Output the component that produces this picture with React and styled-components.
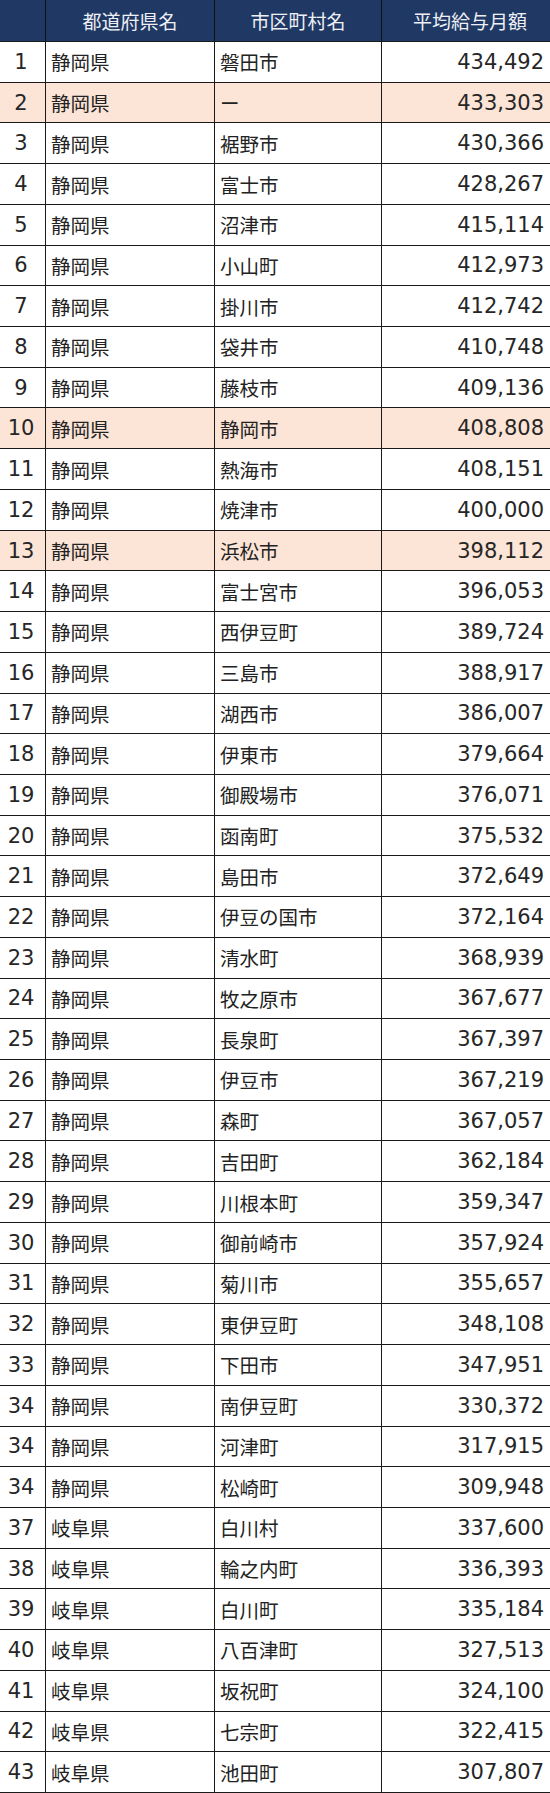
import React from 'react';
import styled, { createGlobalStyle } from 'styled-components';

const GlobalStyle = createGlobalStyle`
  html, body {
    margin: 0;
    padding: 0;
    background: #ffffff;
  }
  body {
    font-family: "Noto Sans CJK JP", "Noto Sans", sans-serif;
  }
`;

const Table = styled.div`
  width: 550px;
  height: 1793px;
  display: grid;
  grid-template-columns: 45px 169px 167px 169px;
  grid-template-rows: 41px repeat(43, 1fr);
  box-sizing: border-box;
  border-right: 1px solid #1a1a1a;
  border-bottom: 1px solid #1a1a1a;
  color: #222;
`;

const HeadCell = styled.div`
  background: #203864;
  color: #eef0f6;
  font-size: 19px;
  display: flex;
  align-items: center;
  justify-content: center;
  border-left: ${(p) => (p.$first ? 'none' : '1px solid #111')};
  padding-left: ${(p) => (p.$shift ? '8px' : '0')};
`;

const Cell = styled.div`
  background: ${(p) => (p.$hl ? '#fce4d6' : '#ffffff')};
  border-top: 1px solid #1a1a1a;
  border-left: ${(p) => (p.$first ? 'none' : '1px solid #1a1a1a')};
  font-size: 19.5px;
  display: flex;
  align-items: center;
  justify-content: ${(p) => p.$align || 'flex-start'};
  padding: 0 5px;
  box-sizing: border-box;
  white-space: nowrap;
`;

const NumCell = styled(Cell)`
  font-family: "DejaVu Sans", "Noto Sans", sans-serif;
  font-size: 21px;
  padding: 0 6px 0 3px;
  color: #262626;
`;

const rows = [
  [1, '静岡県', '磐田市', '434,492'],
  [2, '静岡県', 'ー', '433,303', true],
  [3, '静岡県', '裾野市', '430,366'],
  [4, '静岡県', '富士市', '428,267'],
  [5, '静岡県', '沼津市', '415,114'],
  [6, '静岡県', '小山町', '412,973'],
  [7, '静岡県', '掛川市', '412,742'],
  [8, '静岡県', '袋井市', '410,748'],
  [9, '静岡県', '藤枝市', '409,136'],
  [10, '静岡県', '静岡市', '408,808', true],
  [11, '静岡県', '熱海市', '408,151'],
  [12, '静岡県', '焼津市', '400,000'],
  [13, '静岡県', '浜松市', '398,112', true],
  [14, '静岡県', '富士宮市', '396,053'],
  [15, '静岡県', '西伊豆町', '389,724'],
  [16, '静岡県', '三島市', '388,917'],
  [17, '静岡県', '湖西市', '386,007'],
  [18, '静岡県', '伊東市', '379,664'],
  [19, '静岡県', '御殿場市', '376,071'],
  [20, '静岡県', '函南町', '375,532'],
  [21, '静岡県', '島田市', '372,649'],
  [22, '静岡県', '伊豆の国市', '372,164'],
  [23, '静岡県', '清水町', '368,939'],
  [24, '静岡県', '牧之原市', '367,677'],
  [25, '静岡県', '長泉町', '367,397'],
  [26, '静岡県', '伊豆市', '367,219'],
  [27, '静岡県', '森町', '367,057'],
  [28, '静岡県', '吉田町', '362,184'],
  [29, '静岡県', '川根本町', '359,347'],
  [30, '静岡県', '御前崎市', '357,924'],
  [31, '静岡県', '菊川市', '355,657'],
  [32, '静岡県', '東伊豆町', '348,108'],
  [33, '静岡県', '下田市', '347,951'],
  [34, '静岡県', '南伊豆町', '330,372'],
  [34, '静岡県', '河津町', '317,915'],
  [34, '静岡県', '松崎町', '309,948'],
  [37, '岐阜県', '白川村', '337,600'],
  [38, '岐阜県', '輪之内町', '336,393'],
  [39, '岐阜県', '白川町', '335,184'],
  [40, '岐阜県', '八百津町', '327,513'],
  [41, '岐阜県', '坂祝町', '324,100'],
  [42, '岐阜県', '七宗町', '322,415'],
  [43, '岐阜県', '池田町', '307,807'],
];

export default function App() {
  return (
    <>
      <GlobalStyle />
      <Table>
        <HeadCell $first />
        <HeadCell>都道府県名</HeadCell>
        <HeadCell>市区町村名</HeadCell>
        <HeadCell $shift>平均給与月額</HeadCell>
        {rows.map(([n, pref, city, amount, hl], i) => (
          <React.Fragment key={i}>
            <NumCell $first $hl={hl} $align="center">{n}</NumCell>
            <Cell $hl={hl}>{pref}</Cell>
            <Cell $hl={hl}>{city}</Cell>
            <NumCell $hl={hl} $align="flex-end">{amount}</NumCell>
          </React.Fragment>
        ))}
      </Table>
    </>
  );
}
